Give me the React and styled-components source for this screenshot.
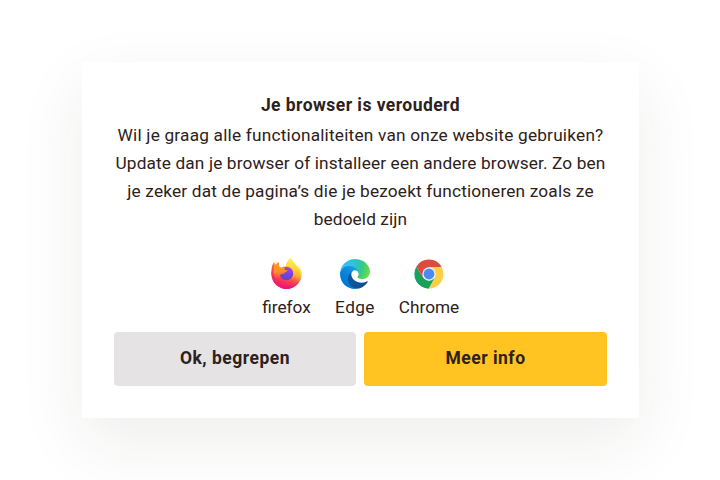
import React from "react";
import styled, { createGlobalStyle } from "styled-components";

const GlobalStyle = createGlobalStyle`
  * { box-sizing: border-box; }
  body {
    margin: 0;
    background: #fff;
    color: #2d211c;
    font-family: Roboto, "Liberation Sans", sans-serif;
    font-size: 17.25px;
  }
`;

const Page = styled.main`
  height: 480px;
  padding: 62px 81px 0 82px;
  overflow: hidden;
`;

const Card = styled.section`
  display: flex;
  flex-direction: column;
  height: 356px;
  padding: 32px;
  background: #fff;
  box-shadow: 0 24px 64px rgba(45, 33, 20, 0.08);
  text-align: center;
`;

const Title = styled.h1`
  margin: 0 0 5px;
  font-size: 17.5px;
  line-height: 22px;
  font-weight: 700;
  letter-spacing: 0.45px;
`;

const Message = styled.p`
  margin: 0;
  line-height: 28px;
`;

const Line = styled.span`
  display: block;
  white-space: nowrap;
  letter-spacing: ${({ $spacing }) => $spacing || 0}px;
`;

const Browsers = styled.div`
  display: flex;
  justify-content: center;
  gap: 24px;
  height: 99px;
  padding-top: 25px;
`;

const Browser = styled.div`
  display: flex;
  flex-direction: column;
  align-items: center;
  width: ${({ $width }) => $width}px;
  line-height: 28px;

  svg {
    display: block;
    flex: none;
    width: 32px;
    height: 32px;
    margin-bottom: 3px;
  }
`;

const Actions = styled.div`
  display: grid;
  grid-template-columns: 242px 243px;
  gap: 8px;
`;

const Button = styled.button`
  height: 54px;
  padding: 0 0 3px;
  border: 0;
  border-radius: 4px;
  background: ${({ $primary }) => ($primary ? "#ffc421" : "#e5e3e4")};
  color: inherit;
  font: inherit;
  font-size: 17.5px;
  font-weight: 700;
  letter-spacing: 0.5px;
`;

const FirefoxIcon = () => (
  <svg viewBox="0.5 0 32 32" aria-hidden="true">
    <defs>
      <linearGradient id="ff-body" x1="27" y1="5" x2="7" y2="29" gradientUnits="userSpaceOnUse">
        <stop offset="0.05" stopColor="#fff44f" />
        <stop offset="0.3" stopColor="#ffb52e" />
        <stop offset="0.5" stopColor="#ff7139" />
        <stop offset="0.75" stopColor="#ff3750" />
        <stop offset="1" stopColor="#e31587" />
      </linearGradient>
      <radialGradient id="ff-globe" cx="18" cy="11" r="12" gradientUnits="userSpaceOnUse">
        <stop offset="0" stopColor="#b03af0" />
        <stop offset="0.5" stopColor="#7542e5" />
        <stop offset="1" stopColor="#5a48bd" />
      </radialGradient>
      <linearGradient id="ff-flame" x1="22" y1="1" x2="24" y2="26" gradientUnits="userSpaceOnUse">
        <stop offset="0" stopColor="#fff04a" />
        <stop offset="0.45" stopColor="#ffcf38" />
        <stop offset="1" stopColor="#ff7a2b" stopOpacity="0.3" />
      </linearGradient>
      <linearGradient id="ff-fox" x1="6" y1="6" x2="8" y2="24" gradientUnits="userSpaceOnUse">
        <stop offset="0" stopColor="#ff9a26" />
        <stop offset="0.45" stopColor="#ff8d2c" />
        <stop offset="1" stopColor="#ff4a45" stopOpacity="0" />
      </linearGradient>
      <linearGradient id="ff-base" x1="16" y1="18" x2="16" y2="31" gradientUnits="userSpaceOnUse">
        <stop offset="0" stopColor="#ff3750" stopOpacity="0" />
        <stop offset="1" stopColor="#e4127c" />
      </linearGradient>
    </defs>
    <path fill="url(#ff-body)" d="M30 11.2C29.3 9.5 27.9 7.7 26.8 7.1c.9 1.7 1.4 3.5 1.6 4.7C26.6 7.4 23.7 5.6 21.2 1.7c-.3-.5-.5-.9-.7-1.6-3.6 2.1-4.9 6-4.9 8.1-2 .1-3.7.9-4.8 1.7-1.2-.6-1.8-1.2-2.4-1.6-.4-1.4-.5-2.8-.1-4.1C6.5 5 5.3 6.2 4.4 7.2 3.8 6.5 3.9 4.2 3.9 3.7 2.4 5 1.2 8.1.9 12.7.7 14 .6 15.2.8 17.1 1.6 25 8.1 31 16 31c7.5 0 13.8-5.5 15-12.7.6-2.7.1-5.1-1-7.1Z" />
    <path fill="url(#ff-base)" d="M.8 17.1h30.3C30.6 25 24.2 31 16 31S1.6 25 .8 17.1Z" />
    <circle cx="16" cy="15.6" r="6.7" fill="url(#ff-globe)" />
    <path fill="url(#ff-flame)" d="M20.5.1c-3.6 2.1-4.9 6-4.9 8.1 3.6-.2 6.2 2 7.1 4.5 1.1 3 .2 6.7-2.3 8.8 3.1-1 5.2-3.8 5.1-6.9 1.4 2.2 1.3 5.8-.5 8.2 3.7-1.7 5-6.3 3.7-10.3-1.3-4.2-5.2-6.7-7.5-10.8-.3-.5-.5-.9-.7-1.6Z" />
    <path fill="url(#ff-fox)" d="M3.9 3.7c0 .5-.1 2.8.5 3.5.9-1 2.1-2.2 3.9-3-.4 1.3-.3 2.7.1 4.1.8.8 1.7 1.3 2.4 1.7 1.4-.8 3.4-.5 4.4.1-.8.4-1.3 1.1-1.3 1.8h2.4c.7.1.9.7.4 1.2-.5.6-1.5 1.1-2.4 1.6-.7.6-.3 1.2-1.7 1.2-1.7 0-2.9.7-3.2 2-.3 1.6.2 2.8 1.1 3.7C6 23 2.5 18 3 13Z" />
  </svg>
);

const EdgeIcon = () => (
  <svg viewBox="-8.5 -8.5 273 273" aria-hidden="true">
    <defs>
      <linearGradient id="edge-dark" x1="63" y1="177" x2="241" y2="177" gradientUnits="userSpaceOnUse">
        <stop offset="0" stopColor="#0c59a4" />
        <stop offset="1" stopColor="#114a8b" />
      </linearGradient>
      <linearGradient id="edge-blue" x1="157" y1="99" x2="46" y2="221" gradientUnits="userSpaceOnUse">
        <stop offset="0" stopColor="#1b9de2" />
        <stop offset="0.16" stopColor="#1595df" />
        <stop offset="0.67" stopColor="#0680d7" />
        <stop offset="1" stopColor="#0078d4" />
      </linearGradient>
      <radialGradient id="edge-green" cx="26" cy="47" r="230" gradientUnits="userSpaceOnUse">
        <stop offset="0" stopColor="#35c1f1" />
        <stop offset="0.25" stopColor="#34c1ed" />
        <stop offset="0.5" stopColor="#2fc2c8" />
        <stop offset="0.72" stopColor="#36c982" />
        <stop offset="1" stopColor="#66dc4e" />
      </radialGradient>
    </defs>
    <path fill="url(#edge-dark)" d="M231 190.5c-3.4 1.8-6.9 3.4-10.5 4.7a101.5 101.5 0 0 1-35.9 6.4c-47.3 0-88.5-32.5-88.5-74.3a31.5 31.5 0 0 1 16.4-27.3c-42.8 1.8-53.8 46.4-53.8 72.5 0 74 68.1 81.4 82.8 81.4 7.9 0 19.8-2.3 27-4.6l1.3-.4a128.3 128.3 0 0 0 66.6-52.8 4 4 0 0 0-5.4-5.6Z" />
    <path fill="url(#edge-blue)" d="M105.7 241.4a79.2 79.2 0 0 1-22.7-21.3 80.7 80.7 0 0 1 29.5-120c3.2-1.5 8.5-4.1 15.6-4a32.4 32.4 0 0 1 25.7 13 31.9 31.9 0 0 1 6.3 18.7c0-.2 24.5-79.6-80-79.6-43.9 0-80 41.6-80 78.2a130.2 130.2 0 0 0 12.1 56 128 128 0 0 0 156.4 67 75.5 75.5 0 0 1-62.8-8Z" />
    <path fill="url(#edge-green)" d="M152.3 148.9c-.9 1-3.4 2.5-3.4 5.6 0 2.6 1.7 5.2 4.8 7.3 14.3 10 41.4 8.6 41.5 8.6a59.6 59.6 0 0 0 30.3-8.3 61.4 61.4 0 0 0 30.4-52.9c.3-22.4-8-37.3-11.3-43.9C223.5 23.9 177.7 0 128 0A128 128 0 0 0 0 126.2c.5-36.5 36.8-66 80-66 3.5 0 23.5.3 42 10 16.3 8.6 24.9 19 30.8 29.2 6.2 10.7 7.3 24.1 7.3 29.5 0 5.3-2.7 13.3-7.8 19.9Z" />
  </svg>
);

const ChromeIcon = () => (
  <svg viewBox="0 0 32 32" aria-hidden="true">
    <path fill="#db4c3f" d="M16 16 3.3 8.7A14.7 14.7 0 0 1 28.8 9.3L16 9.3Z" />
    <path fill="#ffce44" d="M16 9.3h12.8A14.7 14.7 0 0 1 15.6 30.7L21.8 19.4Z" />
    <path fill="#17a05e" d="M3.3 8.7 10.2 19.4 16 22.7l5.8-3.3-6.2 11.3A14.7 14.7 0 0 1 3.3 8.7Z" />
    <path fill="#db4c3f" d="M3.3 8.7 10.2 19.4 16 9.3Z" />
    <circle cx="16" cy="16" r="6.7" fill="#f1f1f1" />
    <circle cx="16" cy="16" r="5.4" fill="#4a8af4" />
  </svg>
);

export default function App() {
  return (
    <Page>
      <GlobalStyle />
      <Card>
        <Title>Je browser is verouderd</Title>
        <Message>
          <Line $spacing={0.2}>Wil je graag alle functionaliteiten van onze website gebruiken? </Line>
          <Line $spacing={0.13}>Update dan je browser of installeer een andere browser. Zo ben </Line>
          <Line $spacing={0.18}>je zeker dat de pagina’s die je bezoekt functioneren zoals ze </Line>
          <Line $spacing={0.1}>bedoeld zijn</Line>
        </Message>
        <Browsers>
          <Browser $width={49}><FirefoxIcon /><Line>firefox</Line></Browser>
          <Browser $width={40}><EdgeIcon /><Line $spacing={0.4}>Edge</Line></Browser>
          <Browser $width={60}><ChromeIcon /><Line>Chrome</Line></Browser>
        </Browsers>
        <Actions>
          <Button>Ok, begrepen</Button>
          <Button $primary>Meer info</Button>
        </Actions>
      </Card>
    </Page>
  );
}
